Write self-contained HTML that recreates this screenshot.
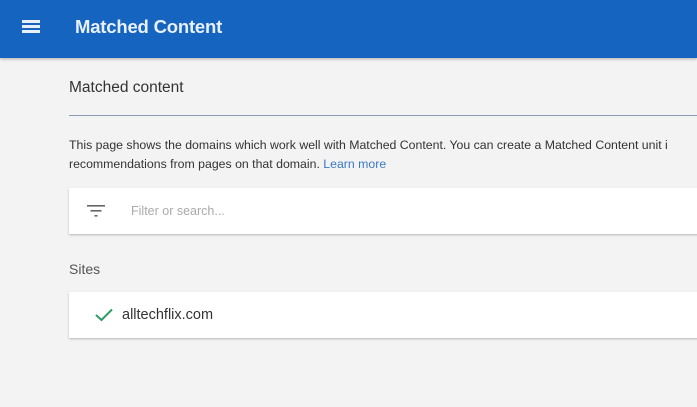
<!DOCTYPE html>
<html><head><style>
body{margin:0;width:697px;height:407px;overflow:hidden;background:#f3f3f3;font-family:"Liberation Sans",sans-serif;position:relative}
.hdr{position:absolute;left:0;top:0;width:697px;height:58px;background:#1565c0;box-shadow:0 1px 3px rgba(0,0,0,.3)}
.hdr .t{position:absolute;left:75px;top:16px;font-size:18.5px;font-weight:bold;color:#e8f0fb;letter-spacing:-0.2px}
.mb{position:absolute;left:22px;width:18px;height:2.5px;background:#e8f0fb}
.a{position:absolute;white-space:nowrap}
.card{position:absolute;left:69px;width:640px;background:#fff;box-shadow:0 1px 2px rgba(0,0,0,.25)}
</style></head><body>
<div class="hdr"><div class="mb" style="top:20px"></div><div class="mb" style="top:25px"></div><div class="mb" style="top:30px"></div><div class="t">Matched Content</div></div>
<div class="a" style="left:69px;top:79px;font-size:15.5px;color:#333">Matched content</div>
<div class="a" style="left:69px;top:115px;width:640px;height:1px;background:#8a9cb8"></div>
<div class="a" style="left:69px;top:136px;font-size:12.3px;color:#333;line-height:19px">This page shows the domains which work well with Matched Content. You can create a Matched Content unit i<br>recommendations from pages on that domain. <span style="color:#3b78c6">Learn more</span></div>
<div class="card" style="top:188px;height:46px">
<svg style="position:absolute;left:18px;top:16px" width="18" height="14"><rect x="0" y="1" width="18" height="1.6" fill="#666"/><rect x="3.5" y="6" width="11" height="1.6" fill="#666"/><rect x="7.5" y="11" width="3" height="1.6" fill="#666"/></svg>
<div class="a" style="left:62px;top:16px;font-size:12.5px;color:#aaa">Filter or search...</div></div>
<div class="a" style="left:69px;top:261px;font-size:14px;color:#555">Sites</div>
<div class="card" style="top:292px;height:46px">
<svg style="position:absolute;left:26px;top:16px" width="18" height="14"><path d="M1 7 L6.5 12 L17 1.5" stroke="#2e9b63" stroke-width="2" fill="none"/></svg>
<div class="a" style="left:53px;top:15px;font-size:14.5px;color:#333">alltechflix.com</div></div>
</body></html>
